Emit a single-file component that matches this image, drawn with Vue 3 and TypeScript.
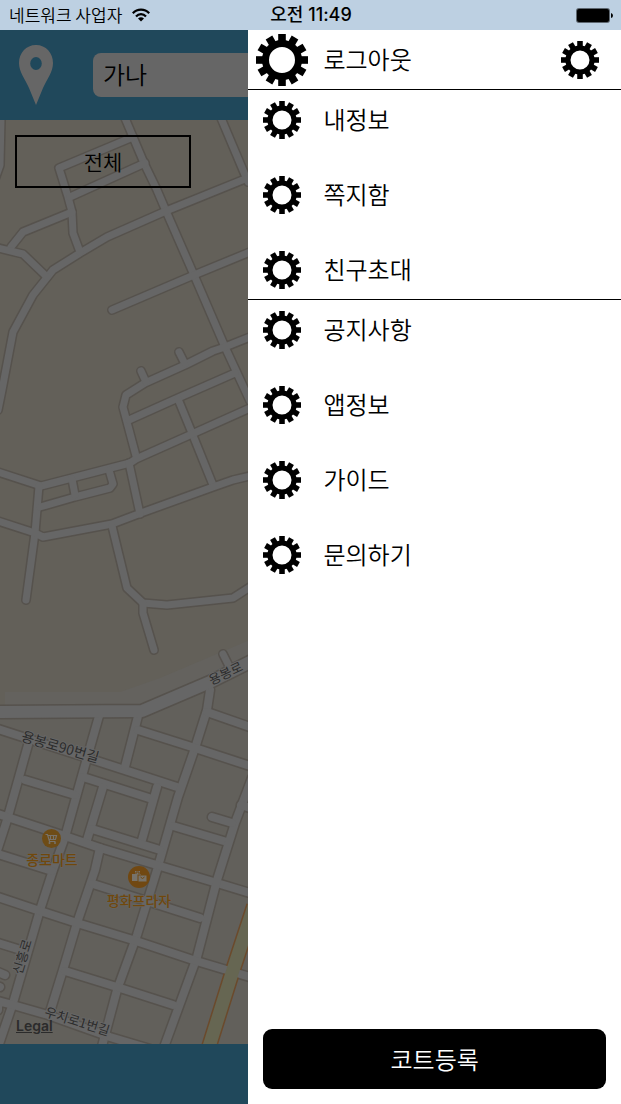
<script setup lang="ts">
import { ref } from 'vue'

interface PlaceLabel {
  text: string
  x: number
  y: number
  angle: number
  size: number
}

const query = ref('가나')

const accountItems: string[] = ['내정보', '쪽지함', '친구초대']
const serviceItems: string[] = ['공지사항', '앱정보', '가이드', '문의하기']

const teeth: number[] = Array.from({ length: 12 }, (_, i) => i * 30)

const lanes: string[] = [
  '125,118 144,163 157,190 166,211 194,275 225,347 250,401',
  '221,118 248,182',
  '250,177 166,211 107,237 80,253 53,270 33,295 13,332 2,390 -2,410',
  '133,137 59,168 68,197 72,212 73,233 80,252',
  '145,163 70,197',
  '72,212 23,232 11,247',
  '-2,248 23,254 47,277',
  '112,310 194,275 250,252',
  '1,118 0,165 -6,182',
  '250,337 225,347 213,351 185,365 145,383 126,395 123,407 136,456',
  '179,352 185,364',
  '141,371 146,382',
  '235,373 178,398 129,420',
  '178,399 192,433 213,485',
  '250,408 192,434 136,459 130,463 41,486 -2,472',
  '39,486 35,533 26,600',
  '-2,521 35,533 43,537 112,524 141,513 213,487 233,480 250,476',
  '129,463 140,514',
  '40,507 75,497 110,488 113,484 109,470',
  '72,479 75,495',
  '112,526 127,588 143,603 167,605 233,598 250,587',
  '143,603 143,613 154,650',
  '223,654 230,668',
]

const streets: string[] = [
  '-2,729 100,762 180,788',
  '99,716 80,783 65,837 53,870 40,910 13,1003 -3,1050',
  '138,716 125,767',
  '210,690 207,710 195,748 178,797 157,870 137,935 117,990 101,1050',
  '28,745 7,820 -6,860',
  '25,780 75,795',
  '83,777 152,799',
  '138,730 195,748 250,766',
  '207,712 250,727',
  '157,787 142,840',
  '103,787 87,840',
  '-2,814 62,835 100,848 160,866 217,883 250,893',
  '92,829 160,850',
  '173,826 227,842',
  '252,778 235,823 217,880 197,957 163,1050',
  '241,805 250,808',
  '212,817 232,823',
  '100,848 95,870 77,923 63,970 50,1012',
  '-2,897 40,911 77,923 133,940 193,960 250,977',
  '93,884 153,903 200,918',
  '65,971 120,988 173,1005',
  '-2,854 52,871',
  '-2,1010 -2,1001 13,1005 48,1015 110,1037 150,1049',
  '-2,943 24,951',
  '-2,972 5,975',
  '-3,986 0,987',
]

const avenue = '-4,712 142,711 210,682 252,661'
const highway = '208,1050 233,970 254,906'

const streetLabels: PlaceLabel[] = [
  { text: '용봉로', x: 226, y: 674, angle: -25, size: 13 },
  { text: '용봉로90번길', x: 60, y: 748, angle: 16, size: 14 },
  { text: '신흥로', x: 23, y: 957, angle: -73, size: 13 },
  { text: '우치로1번길', x: 77, y: 1022, angle: 17, size: 13 },
]
</script>

<template>
  <div class="screen">
    <svg class="defs" aria-hidden="true">
      <symbol id="gear" viewBox="-26 -26 52 52">
        <circle r="16.5" fill="none" stroke="#000" stroke-width="7" />
        <rect
          v-for="angle in teeth"
          :key="angle"
          x="-3.8"
          y="-26"
          width="7.6"
          height="9"
          :transform="`rotate(${angle})`"
        />
      </symbol>
    </svg>

    <header class="status">
      <div class="carrier">
        <span>네트워크 사업자</span>
        <svg class="wifi" viewBox="0 0 18 14" aria-hidden="true">
          <g fill="none" stroke="#000" stroke-width="2.2">
            <path d="M.8 5.2C5.3.3 12.700.3 17.200 5.200" />
            <path d="M4 8.500C6.800 5.400 11.200 5.400 14 8.500" />
          </g>
          <path d="M9 13.500 6 10.600Q9 7.900 12 10.600Z" />
        </svg>
      </div>
      <time class="clock">오전 11:49</time>
      <svg class="battery" viewBox="0 0 37 15" aria-hidden="true">
        <rect width="34" height="15" rx="3" fill="#5d666f" />
        <rect x="1" y="1" width="32" height="13" rx="2" />
        <path d="M35 5Q37 5.500 37 7.500T35 10Z" />
      </svg>
    </header>

    <div class="body">
      <main class="behind">
        <div class="search">
          <svg class="pin" viewBox="0 0 34 60" aria-hidden="true">
            <path
              fill="#666"
              fill-rule="evenodd"
              d="M17 0C7 0 0 8 0 18C0 27 6 34 10 43L17 60L24 43C28 34 34 27 34 18C34 8 27 0 17 0ZM17 12A5.800 6.500 0 0 1 17 25A5.800 6.500 0 0 1 17 12Z"
            />
          </svg>
          <input v-model="query" class="query" type="text" aria-label="검색" />
        </div>

        <section class="map">
          <svg class="tiles" viewBox="0 120 249 924" preserveAspectRatio="xMinYMin slice" aria-hidden="true">
            <rect y="118" width="252" height="930" fill="#636059" />
            <path d="M-2 712H142L252 664V1050H-2Z" fill="#62605b" />
            <path d="M5 692H120L160 678L252 639V664L142 711H5Z" fill="#64625e" />
            <g class="casing">
              <polyline v-for="p in lanes" :key="p" :points="p" />
              <polyline v-for="p in streets" :key="p" :points="p" class="wide" />
              <polyline :points="avenue" class="avenue" />
            </g>
            <polyline :points="highway" fill="none" stroke="#6b4a2c" stroke-width="16" />
            <g class="surface">
              <polyline v-for="p in lanes" :key="p" :points="p" />
              <polyline v-for="p in streets" :key="p" :points="p" class="wide" />
              <polyline :points="avenue" class="avenue" />
            </g>
            <polyline :points="highway" fill="none" stroke="#666652" stroke-width="13" />

            <g class="names">
              <text
                v-for="l in streetLabels"
                :key="l.text"
                :font-size="l.size"
                :transform="`translate(${l.x} ${l.y}) rotate(${l.angle})`"
                dy="4"
              >{{ l.text }}</text>
            </g>

            <g transform="translate(51.500 838.500)">
              <circle r="9.500" fill="#6e4c16" />
              <path d="M-6-4H-4L-2 3H4M-4-3H5L4 1H-3M-1-3V1M2-3V1" fill="none" stroke="#77736b" stroke-width="1.200" />
              <circle cx="-2" cy="4.500" r="1" fill="#77736b" />
              <circle cx="3.500" cy="4.500" r="1" fill="#77736b" />
            </g>
            <g transform="translate(139 877)">
              <circle r="11" fill="#714812" />
              <path d="M-7-3H-4V-6H1V-3H2V4H-7Z" fill="#77736b" />
              <path d="M-3-3V-5H0V-3" fill="none" stroke="#714812" />
              <rect x="-1" y="-2" width="9" height="7" fill="#77736b" stroke="#714812" />
              <path d="M1.500 0Q3.500 3 5.500 0" fill="none" stroke="#714812" />
            </g>
            <g class="names shops">
              <text x="52" y="865">종로마트</text>
              <text x="139" y="906">평화프라자</text>
            </g>
          </svg>
          <button class="filter" type="button">전체</button>
          <a class="legal" href="#legal">Legal</a>
        </section>

        <div class="bottom"></div>
      </main>

      <aside class="drawer">
        <div class="account">
          <button class="item" type="button">
            <span class="mark"><svg class="gear large"><use href="#gear" /></svg></span>
            <span class="label">로그아웃</span>
          </button>
          <button class="settings" type="button" aria-label="설정">
            <svg class="gear"><use href="#gear" /></svg>
          </button>
        </div>
        <nav class="group ruled">
          <button v-for="name in accountItems" :key="name" class="item" type="button">
            <span class="mark"><svg class="gear"><use href="#gear" /></svg></span>
            <span class="label">{{ name }}</span>
          </button>
        </nav>
        <nav class="group">
          <button v-for="name in serviceItems" :key="name" class="item" type="button">
            <span class="mark"><svg class="gear"><use href="#gear" /></svg></span>
            <span class="label">{{ name }}</span>
          </button>
        </nav>
        <button class="register" type="button">코트등록</button>
      </aside>
    </div>
  </div>
</template>

<style>
body {
  margin: 0;
}
</style>

<style scoped>
.screen {
  display: flex;
  flex-direction: column;
  min-height: 100vh;
  color: #000;
  font-family: 'Noto Sans CJK KR', sans-serif;
  font-weight: 350;
}
.screen * {
  box-sizing: border-box;
}
button,
input {
  margin: 0;
  padding: 0;
  border: 0;
  background: none;
  color: inherit;
  font: inherit;
}
.defs {
  position: absolute;
  width: 0;
  height: 0;
}
.status {
  display: grid;
  grid-template-columns: 1fr auto 1fr;
  align-items: center;
  height: 30px;
  padding: 0 8px 0 9px;
  background: #bdd0e2;
  font-size: 17px;
  line-height: 30px;
}
.carrier {
  display: flex;
  align-items: center;
  gap: 10px;
  white-space: nowrap;
}
.wifi {
  width: 18px;
  height: 14px;
}
.clock {
  font-family: Inter, 'Noto Sans CJK KR', sans-serif;
  font-size: 18px;
  font-weight: 500;
}
.battery {
  justify-self: end;
  width: 37px;
  height: 15px;
}
.body {
  display: flex;
  flex: 1;
}
.behind {
  display: flex;
  flex: 2 1 0;
  flex-direction: column;
  min-width: 0;
  overflow: hidden;
  background: #20485b;
}
.search {
  display: flex;
  align-items: center;
  gap: 40px;
  height: 90px;
  padding-left: 19px;
}
.pin {
  flex: none;
  width: 34px;
  height: 60px;
}
.query {
  flex: 1;
  min-width: 0;
  height: 44px;
  padding: 0 10px 4px;
  border-radius: 8px 0 0 8px;
  background: #666;
  font-size: 24px;
}
.map {
  position: relative;
  flex: 1;
  padding: 15px;
}
.tiles {
  position: absolute;
  inset: 0;
  width: 100%;
  height: 100%;
}
.casing,
.surface {
  fill: none;
  stroke-linecap: round;
  stroke-linejoin: round;
}
.casing {
  stroke: #56524d;
  stroke-width: 10px;
}
.casing .wide {
  stroke-width: 11px;
}
.casing .avenue {
  stroke-width: 15px;
}
.surface {
  stroke: #666;
  stroke-width: 7px;
}
.surface .wide {
  stroke-width: 8px;
}
.surface .avenue {
  stroke-width: 12px;
}
.names {
  fill: #2c2c2c;
  font-weight: 400;
  stroke: #666;
  stroke-width: 2px;
  paint-order: stroke;
  text-anchor: middle;
}
.shops {
  fill: #70480c;
  stroke-width: 1px;
  font-size: 14px;
  font-weight: 500;
}
.filter {
  position: relative;
  display: block;
  width: 176px;
  height: 53px;
  padding-bottom: 2px;
  border: 2px solid #000;
  font-size: 21px;
}
.legal {
  position: absolute;
  bottom: 10px;
  left: 16px;
  color: #2b2b2b;
  font-family: Inter, sans-serif;
  font-size: 14px;
  font-weight: 600;
  line-height: 17px;
}
.bottom {
  height: 60px;
}
.drawer {
  display: flex;
  flex: 3 1 0;
  flex-direction: column;
  min-width: 0;
  background: #fff;
  font-size: 24px;
}
.account {
  display: flex;
  align-items: center;
  justify-content: space-between;
  height: 60px;
  padding-right: 22px;
  border-bottom: 1px solid #000;
}
.item {
  display: flex;
  align-items: center;
  gap: 7px;
  height: 38px;
  text-align: left;
}
.label {
  padding-bottom: 2px;
  line-height: 36px;
}
.mark {
  display: flex;
  justify-content: center;
  width: 68px;
}
.gear {
  display: block;
  flex: none;
  width: 38px;
  height: 38px;
}
.gear.large {
  width: 52px;
  height: 52px;
}
.group {
  display: flex;
  flex-direction: column;
  gap: 37px;
  padding: 11px 0 10px;
}
.ruled {
  border-bottom: 1px solid #000;
}
.register {
  height: 60px;
  margin: auto 15px 15px;
  padding-bottom: 2px;
  border-radius: 9px;
  background: #000;
  color: #fff;
}
</style>
